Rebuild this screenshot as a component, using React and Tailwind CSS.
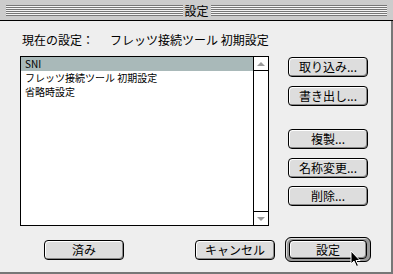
import React from "react";

const FONT = { fontFamily: '"Noto Sans CJK JP", "Noto Sans", sans-serif' };

function Btn({ label, className = "" }) {
  return (
    <div
      className={`flex items-center justify-center w-[80px] h-[20px] rounded-[4px] border border-black bg-[#dddddd] shadow-[inset_1px_1px_0_#ffffff,inset_-1px_-1px_0_#888888] text-[12px] leading-none text-black ${className}`}
    >
      {label}
    </div>
  );
}

function Stripes() {
  return (
    <div className="flex-1 h-[11px] bg-[repeating-linear-gradient(to_bottom,#777777_0px,#777777_1px,#f4f4f4_1px,#f4f4f4_2px)]" />
  );
}

export default function App() {
  const rows = ["SNI", "フレッツ接続ツール 初期設定", "省略時設定"];

  return (
    <div
      className="relative w-[393px] h-[274px] overflow-hidden bg-[#eeeeee] flex flex-col"
      style={FONT}
    >
      {/* Title bar */}
      <div className="h-[21px] shrink-0 bg-[#cccccc] border-b border-black flex items-center pl-[6px] pr-[6px] pt-[1px]">
        <Stripes />
        <div className="px-[2px] text-[12px] leading-none text-black">設定</div>
        <Stripes />
      </div>

      {/* Body */}
      <div className="flex-1 flex flex-col border-r-2 border-b-2 border-[#777777] pl-[20px]">
        <div className="flex items-center h-[14px] mt-[12px] text-[12px] leading-none text-black">
          <span className="w-[90px] pl-[2px]">現在の設定：</span>
          <span>フレッツ接続ツール 初期設定</span>
        </div>

        <div className="flex mt-[9px]">
          {/* List box */}
          <div className="w-[249px] h-[170px] border border-black bg-white flex">
            <div className="flex-1 flex flex-col text-[10px] leading-none text-black">
              {rows.map((r, i) => (
                <div
                  key={r}
                  className={`h-[14px] flex items-center pl-[4px] ${i === 0 ? "bg-[#a9b9b9]" : ""}`}
                >
                  {r}
                </div>
              ))}
            </div>
            <div className="w-[15px] border-l border-black flex flex-col">
              <div className="h-[14px] border-b border-black flex items-center justify-center">
                <div className="w-0 h-0 border-l-[4px] border-r-[4px] border-b-[4px] border-l-transparent border-r-transparent border-b-[#999999]" />
              </div>
              <div className="flex-1" />
              <div className="h-[14px] border-t border-black flex items-center justify-center">
                <div className="w-0 h-0 border-l-[4px] border-r-[4px] border-t-[4px] border-l-transparent border-r-transparent border-t-[#999999]" />
              </div>
            </div>
          </div>

          {/* Side buttons */}
          <div className="flex flex-col ml-[19px] pt-[1px]">
            <Btn label="取り込み..." />
            <Btn label="書き出し..." className="mt-[9px]" />
            <Btn label="複製..." className="mt-[23px]" />
            <Btn label="名称変更..." className="mt-[9px]" />
            <Btn label="削除..." className="mt-[8px]" />
          </div>
        </div>

        {/* Bottom buttons */}
        <div className="flex items-center mt-[11px]">
          <Btn label="済み" className="ml-[24px]" />
          <Btn label="キャンセル" className="ml-[71px]" />
          <div className="ml-[10px] w-[86px] h-[25px] rounded-[6px] border border-black bg-[#999999] shadow-[inset_1px_1px_0_#dddddd] flex items-center justify-center">
            <div className="w-[78px] h-[19px] rounded-[4px] border border-black bg-[#dddddd] shadow-[inset_1px_1px_0_#ffffff,inset_-1px_-1px_0_#888888] flex items-center justify-center text-[12px] leading-none text-black">
              設定
            </div>
          </div>
        </div>
      </div>

      {/* Mouse cursor */}
      <svg
        className="absolute left-[350px] top-[250px]"
        width="12"
        height="18"
        viewBox="0 0 12 18"
      >
        <path
          d="M1 1 L1 14 L4 11 L6.5 16.5 L8.5 15.5 L6 10.5 L10 10.5 Z"
          fill="#000"
          stroke="#fff"
          strokeWidth="1"
          strokeLinejoin="miter"
        />
      </svg>
    </div>
  );
}
